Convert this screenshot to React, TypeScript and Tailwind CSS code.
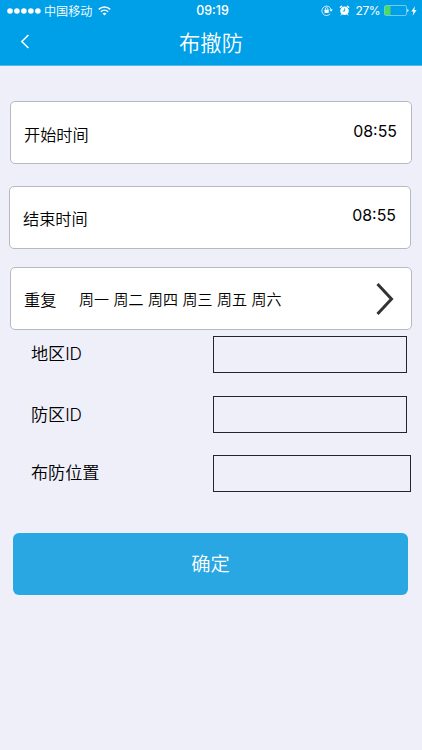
import type { ReactNode } from "react"

const days = ["周一", "周二", "周四", "周三", "周五", "周六"]

function StatusBar() {
  return (
    <div className="grid h-[22px] grid-cols-[1fr_auto_1fr] items-center pl-[7px] pr-[5px]">
      <div className="flex items-center">
        <svg width="35" height="6" viewBox="0 0 35 6" fill="currentColor">
          {[3, 9.9, 16.9, 23.9, 30.9].map((cx) => (
            <circle key={cx} cx={cx} cy="3" r="2.8" />
          ))}
        </svg>
        <span className="mt-px ml-[2px] text-[12.1px] leading-[21px] font-[350]">中国移动</span>
        <svg className="ml-[6px]" width="13" height="10" viewBox="0 0 13 10" fill="none" stroke="currentColor">
          <path d="M.8 3.4C4 .3 9 .3 12.2 3.4" strokeWidth="1.5" />
          <path d="M2.9 5.7c2-1.9 5.2-1.9 7.2 0" strokeWidth="1.4" />
          <path d="M4.5 7.4c1.1-1 2.9-1 4 0l-2 2.1z" fill="currentColor" stroke="none" />
        </svg>
      </div>
      <span className="ml-[1px] text-[12.4px] leading-[22px] font-medium">09:19</span>
      <div className="flex items-center justify-end">
        {/* rotation lock */}
        <svg className="mb-[2px]" width="12" height="11" viewBox="0 0 12 11" fill="none" stroke="currentColor" strokeWidth="0.8">
          <path d="M9.2 8.8A4.7 4.7 0 1 1 10.2 5" />
          <path d="M8.4 4.6h3.4l-1.7 2.1z" fill="currentColor" stroke="none" />
          <path d="M4.3 5V3.9a1.3 1.3 0 0 1 2.6 0V5" />
          <rect x="3.5" y="4.8" width="4.2" height="3.1" rx="0.4" fill="currentColor" stroke="none" />
        </svg>
        {/* alarm */}
        <svg className="mb-[2px] ml-[6px]" width="11" height="11" viewBox="0 0 11 11" fill="none" stroke="currentColor">
          <circle cx="5.5" cy="5.8" r="4.3" fill="currentColor" stroke="none" />
          <path d="M1.3 2.3 2.6 1.2M9.7 2.3 8.4 1.2" strokeWidth="1.3" strokeLinecap="round" />
          <path d="M2.6 9.2 2 10M8.4 9.2l.6.8" strokeWidth="1" strokeLinecap="round" />
          <path d="M5.7 3.4v2.7H3.8" stroke="#00a0e9" strokeWidth="0.9" />
        </svg>
        <span className="ml-[6px] text-[12px] leading-[22px] tracking-[-0.5px]">27%</span>
        <svg className="mb-[1px] ml-[4px]" width="26" height="11" viewBox="0 0 26 11" fill="none">
          <rect x="0.5" y="0.5" width="22" height="10" rx="1.6" stroke="#8fd5f6" strokeWidth="0.8" />
          <rect x="0.7" y="0.8" width="5.8" height="9.4" rx="1" fill="#4cd964" />
          <path d="M23.4 3.8c1.5.4 1.5 3 0 3.4z" fill="currentColor" />
        </svg>
        <svg className="mb-[1px] ml-[1px]" width="6" height="10" viewBox="0 0 6 10" fill="currentColor">
          <path d="M4 .3.3 5.5h2.2L1.6 9.7 5.6 4H3.3z" />
        </svg>
      </div>
    </div>
  )
}

function NavBar() {
  return (
    <div className="grid h-[43px] grid-cols-[1fr_auto_1fr] items-center">
      <svg className="mb-[4px] ml-5" width="10" height="15" viewBox="0 0 10 15" fill="none" stroke="currentColor" strokeWidth="1.5">
        <path d="M8.4 1 1.8 7.5 8.4 14" />
      </svg>
      <h1 className="text-[21.3px] leading-[43px] font-[350]">布撤防</h1>
    </div>
  )
}

function Card({ className, children }: { className: string; children: ReactNode }) {
  return (
    <div className={`flex h-[63px] w-[402px] items-center rounded-[5px] border border-[#b8b8c0] bg-white pl-[13px] ${className}`}>
      {children}
    </div>
  )
}

function Field({ label, className, labelClass, inputClass }: { label: string; className: string; labelClass: string; inputClass: string }) {
  return (
    <div className={`flex h-[37px] items-center pl-[31px] ${className}`}>
      <span className={`w-[182px] text-[17.2px] leading-6 font-[350] tracking-[-0.1px] ${labelClass}`}>{label}</span>
      <div className={`h-[37px] border border-[#24242c] ${inputClass}`} />
    </div>
  )
}

export default function App() {
  return (
    <div className="min-h-[750px] w-[422px] bg-[#efeffa] font-['Inter','Noto_Sans_CJK_SC',sans-serif] text-black">
      <header className="h-[66px] border-b border-[#55b9ee] bg-[#00a0e9] text-white">
        <StatusBar />
        <NavBar />
      </header>

      <Card className="mt-[35px] ml-[10px]">
        <span className="mt-[5px] text-[16.2px] font-[350]">开始时间</span>
        <span className="mr-[14px] mb-[1px] ml-auto text-[15.9px]">08:55</span>
      </Card>
      <Card className="mt-[22px] ml-[9px]">
        <span className="mt-1 text-[16.2px] font-[350]">结束时间</span>
        <span className="mr-[14px] mb-[3px] ml-auto text-[15.9px]">08:55</span>
      </Card>
      <Card className="mt-[18px] ml-[10px]">
        <span className="mt-[4px] w-[55px] text-[16.2px] font-[350]">重复</span>
        <span className="mt-[4px] text-[15px] font-[350] [word-spacing:0.3px]">{days.join(" ")}</span>
        <svg className="mr-[17px] ml-auto" width="18" height="34" viewBox="0 0 18 34" fill="none" stroke="#333" strokeWidth="3">
          <path d="M1.5 2 15.5 17l-14 15" />
        </svg>
      </Card>

      <Field label="地区ID" className="mt-[6px]" labelClass="mb-[2px]" inputClass="w-[194px]" />
      <Field label="防区ID" className="mt-[23px]" labelClass="mt-px" inputClass="w-[194px]" />
      <Field label="布防位置" className="mt-[22px]" labelClass="mb-[1px]" inputClass="w-[198px]" />

      <button className="mt-[41px] ml-[13px] block h-[62px] w-[395px] rounded-[6px] bg-[#28a7e3] text-[19.3px] font-[350] text-white">
        确定
      </button>
    </div>
  )
}
